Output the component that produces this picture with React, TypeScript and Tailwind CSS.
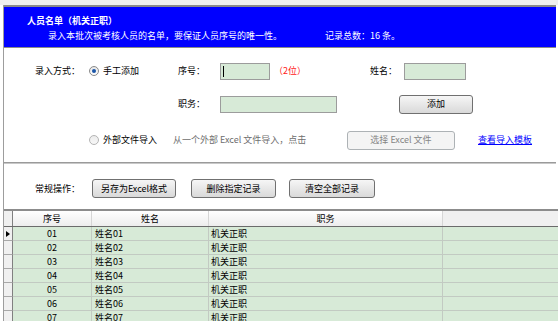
const rows = ["01", "02", "03", "04", "05", "06", "07", "08"];

function Radio({ checked }: { checked?: boolean }) {
  return (
    <span
      className={
        checked
          ? "flex h-[10px] w-[10px] shrink-0 items-center justify-center rounded-full border border-[#8a8a8a] bg-gradient-to-b from-[#e6e6e6] to-[#ffffff]"
          : "flex h-[10px] w-[10px] shrink-0 items-center justify-center rounded-full border border-[#b4b4b4] bg-gradient-to-b from-[#ececec] to-[#f8f8f8]"
      }
    >
      {checked ? <span className="h-[4px] w-[4px] rounded-full bg-[#1b56a8]" /> : null}
    </span>
  );
}

function Btn({ children, className }: { children: React.ReactNode; className: string }) {
  return (
    <div
      className={`flex shrink-0 items-center justify-center rounded-[3px] border border-[#707070] bg-gradient-to-b from-[#f6f6f6] to-[#d9d9d9] ${className}`}
    >
      {children}
    </div>
  );
}

export default function App() {
  return (
    <div className="h-[321px] w-[558px] overflow-hidden bg-white font-['Noto_Sans_CJK_SC','Liberation_Sans',sans-serif] text-[9px] leading-[12px] text-black">
      <div className="h-[5px] bg-[#efefef]" />
      <div className="ml-[3px] flex h-[316px] flex-col border-l border-[#9d9d9d]">
        <header className="mr-[2px] h-[43px] shrink-0 border-t-2 border-b border-t-[#8a8a8a] border-b-[#8a8a8a] bg-[#0000ff] pl-[23px] pt-[8px] text-white">
          <div className="font-bold">人员名单（机关正职）</div>
          <div className="mt-[3px] flex pl-[21px]">
            <span className="w-[277px] shrink-0">录入本批次被考核人员的名单，要保证人员序号的唯一性。</span>
            <span>记录总数：16 条。</span>
          </div>
        </header>

        <section className="shrink-0 pt-[13px]">
          <div className="flex h-[20px] items-center pl-[31px]">
            <span className="w-[54px] shrink-0">录入方式：</span>
            <div className="flex w-[89px] shrink-0 items-center">
              <Radio checked />
              <span className="ml-[4px]">手工添加</span>
            </div>
            <span className="w-[42px] shrink-0">序号：</span>
            <div className="flex h-[17px] w-[50px] shrink-0 items-center border border-[#9c9c9c] bg-[#d7ead7] pl-[2px]">
              <span className="h-[11px] w-px bg-black" />
            </div>
            <span className="w-[100px] shrink-0 pl-[4px] text-[#ff2020]">（2位）</span>
            <span className="w-[34px] shrink-0">姓名：</span>
            <div className="h-[17px] w-[62px] shrink-0 border border-[#9c9c9c] bg-[#d7ead7]" />
          </div>

          <div className="mt-[13px] flex h-[20px] items-center pl-[174px]">
            <span className="w-[42px] shrink-0">职务：</span>
            <div className="mt-[1px] h-[17px] w-[117px] shrink-0 border border-[#9c9c9c] bg-[#d7ead7]" />
            <Btn className="ml-[62px] h-[19px] w-[74px]">添加</Btn>
          </div>

          <div className="mt-[16px] flex h-[20px] items-center pl-[85px]">
            <div className="flex w-[84px] shrink-0 items-center">
              <Radio />
              <span className="ml-[4px]">外部文件导入</span>
            </div>
            <span className="w-[174px] shrink-0 text-[#6e6e6e]">从一个外部 Excel 文件导入，点击</span>
            <div className="flex h-[19px] w-[108px] shrink-0 items-center justify-center rounded-[3px] border border-[#adb2b5] bg-[#f4f4f4] text-[#858585]">
              选择 Excel 文件
            </div>
            <span className="ml-[23px] text-[#0000ff] underline">查看导入模板</span>
          </div>
        </section>

        <div className="mr-[2px] mt-[12px] h-[2px] shrink-0 border-t border-b border-t-[#9a9a9a] border-b-[#c8c8c8]" />

        <div className="mt-[15px] flex h-[19px] shrink-0 items-center pl-[31px]">
          <span className="w-[57px] shrink-0">常规操作：</span>
          <Btn className="h-[19px] w-[84px]">另存为Excel格式</Btn>
          <Btn className="ml-[15px] h-[19px] w-[85px]">删除指定记录</Btn>
          <Btn className="ml-[13px] h-[19px] w-[86px]">清空全部记录</Btn>
        </div>

        <div className="mt-[11px] flex-1 border-t-2 border-[#8c8c8c]">
          <div className="flex h-[16px] border-b border-[#6b6b6b]">
            <div className="w-[9px] shrink-0 border-r border-[#808080] bg-[#f0f0f0]" />
            <div className="flex w-[79px] shrink-0 items-center justify-center border-r border-[#d6d6d6] bg-gradient-to-b from-[#ffffff] to-[#ededed]">
              序号
            </div>
            <div className="flex w-[117px] shrink-0 items-center justify-center border-r border-[#d6d6d6] bg-gradient-to-b from-[#ffffff] to-[#ededed]">
              姓名
            </div>
            <div className="flex w-[234px] shrink-0 items-center justify-center border-r border-[#d6d6d6] bg-gradient-to-b from-[#ffffff] to-[#ededed]">
              职务
            </div>
            <div className="flex-1 bg-[#f0f0f0]" />
          </div>
          {rows.map((r, i) => (
            <div key={r} className="flex h-[14px]">
              <div className="flex w-[9px] shrink-0 items-center border-r border-b border-r-[#808080] border-b-[#a8a8a8] bg-[#f0f0f0]">
                {i === 0 ? (
                  <span className="ml-[2px] h-0 w-0 border-y-[3px] border-l-[4px] border-y-transparent border-l-black" />
                ) : null}
              </div>
              <div className="flex w-[79px] shrink-0 items-center justify-center border-r border-b border-[#c2cac2] bg-[#d7ead7]">
                {r}
              </div>
              <div className="flex w-[117px] shrink-0 items-center border-r border-b border-[#c2cac2] bg-[#d7ead7] pl-[3px]">
                姓名{r}
              </div>
              <div className="flex w-[234px] shrink-0 items-center border-r border-b border-[#c2cac2] bg-[#d7ead7] pl-[2px]">
                机关正职
              </div>
              <div className="flex-1 border-b border-[#c2cac2] bg-[#d7ead7]" />
            </div>
          ))}
        </div>
      </div>
    </div>
  );
}
